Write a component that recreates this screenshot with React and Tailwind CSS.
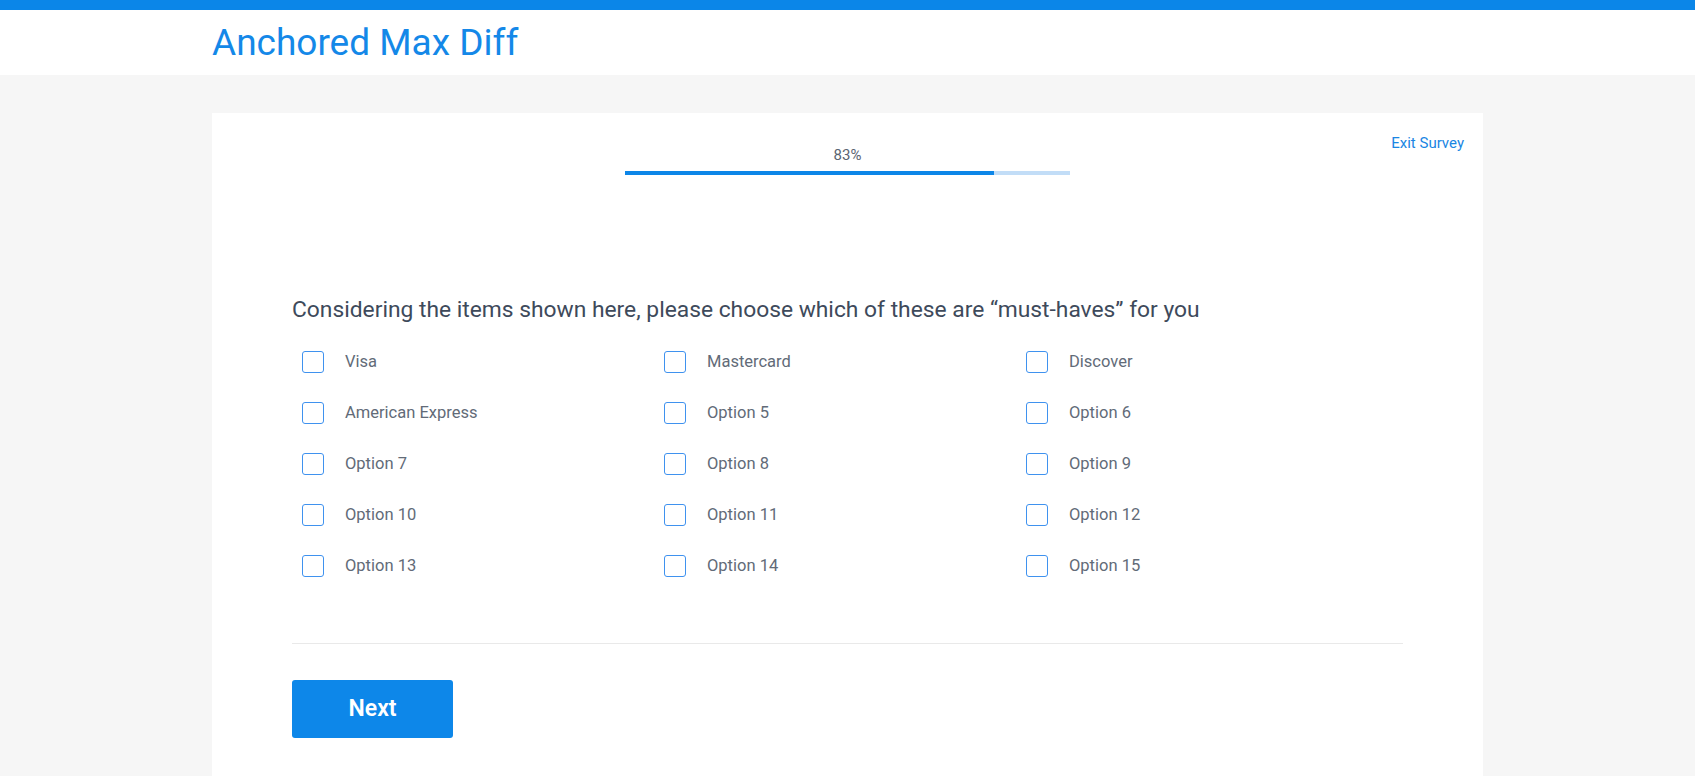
import React from "react";

const options = [
  "Visa", "Mastercard", "Discover",
  "American Express", "Option 5", "Option 6",
  "Option 7", "Option 8", "Option 9",
  "Option 10", "Option 11", "Option 12",
  "Option 13", "Option 14", "Option 15",
];

export default function App() {
  return (
    <div className="min-h-screen bg-[#f6f6f6] font-[Roboto,'Liberation_Sans',sans-serif]">
      <div className="h-[10px] bg-[#0b86e8]" />
      <header className="h-[65px] bg-white flex items-center pl-[212px]">
        <h1 className="text-[37px] leading-none text-[#1488e8] font-normal">Anchored Max Diff</h1>
      </header>
      <main className="mx-[212px] mt-[38px] bg-white pb-[80px]">
        <div className="grid grid-cols-[1fr_445px_1fr]">
          <div />
          <div className="pt-[32px] flex flex-col items-center">
            <div className="text-[15px] leading-[20px] text-[#5b6472]">83%</div>
            <div className="mt-[6px] w-full h-[4px] bg-[#c2ddf7]">
              <div className="h-full bg-[#0d86e8]" style={{ width: "83%" }} />
            </div>
          </div>
          <div className="pt-[20px] pr-[19px] flex justify-end items-start">
            <a className="text-[15px] leading-[20px] text-[#1a86e3] cursor-pointer">Exit Survey</a>
          </div>
        </div>

        <div className="px-[80px] pt-[121px]">
          <p className="text-[22.8px] leading-[28px] text-[#3e4a5b]">
            Considering the items shown here, please choose which of these are “must-haves” for you
          </p>
          <div className="mt-[27px] pl-[10px] grid grid-cols-[362px_362px_362px] gap-y-[29px]">
            {options.map((o) => (
              <label key={o} className="flex items-center gap-[21px] cursor-pointer">
                <span className="w-[22px] h-[22px] rounded-[3px] border-[1.5px] border-[#3f92ef] bg-white shrink-0" />
                <span className="text-[16.5px] leading-[22px] text-[#626b78]">{o}</span>
              </label>
            ))}
          </div>
          <div className="mt-[66px] h-px bg-[#e9e9e9]" />
          <button className="mt-[36px] w-[161px] h-[58px] rounded-[3px] bg-[#0d87e9] text-white text-[23px] font-semibold">
            Next
          </button>
        </div>
      </main>
    </div>
  );
}
